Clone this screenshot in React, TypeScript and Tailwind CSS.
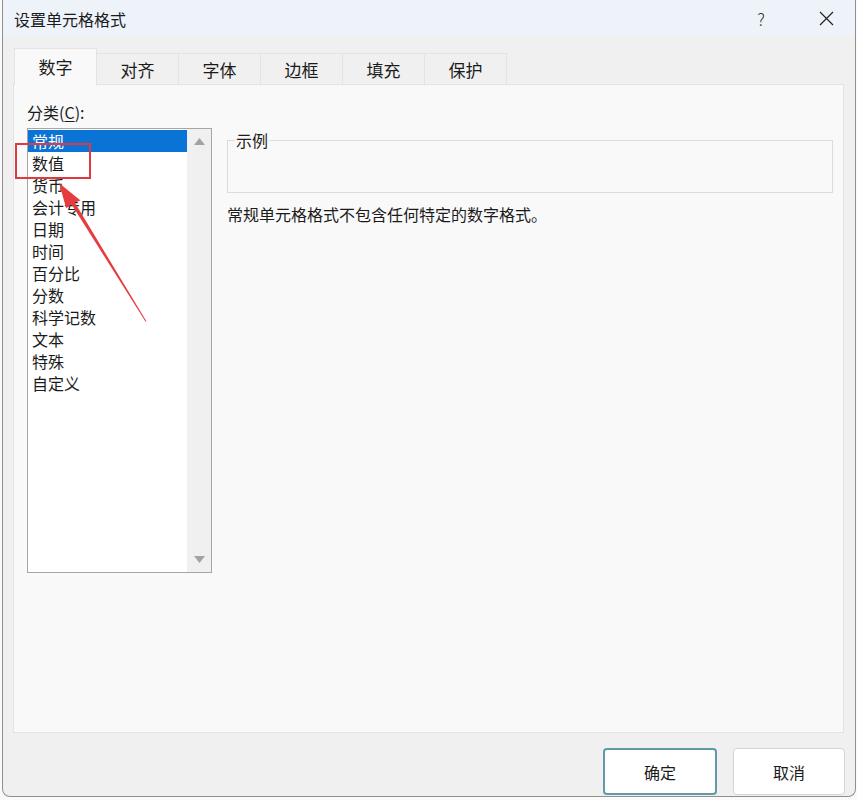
import React from "react";

const tabs = ["数字", "对齐", "字体", "边框", "填充", "保护"];

const categories = [
  "常规",
  "数值",
  "货币",
  "会计专用",
  "日期",
  "时间",
  "百分比",
  "分数",
  "科学记数",
  "文本",
  "特殊",
  "自定义",
];

export default function App() {
  return (
    <div className="relative w-[857px] h-[800px] overflow-hidden bg-[#fafafa] font-['Noto_Sans_CJK_SC','Noto_Sans',sans-serif] text-[#1b1b1b]">
      {/* Dialog window */}
      <div className="ml-[2px] w-[854px] h-[797px] flex flex-col border-x border-b border-[#8f8f8f] rounded-b-[8px] overflow-hidden bg-[#f0f0f0]">
        {/* Title bar */}
        <div className="h-[37px] shrink-0 flex items-center bg-[#eef3fa]">
          <span className="pl-[11px] text-[16px] leading-none">设置单元格格式</span>
          <span className="ml-auto mr-[54px] text-[17px] font-light leading-none text-[#333]">?</span>
          <svg className="mr-[21px] w-[15px] h-[15px]" viewBox="0 0 15 15">
            <path d="M1 1L14 14M14 1L1 14" stroke="#222" strokeWidth={1.2} fill="none" />
          </svg>
        </div>

        {/* Tabs */}
        <div className="mt-[11px] h-[36px] pl-[11px] flex items-end">
          {tabs.map((t, i) =>
            i === 0 ? (
              <div
                key={t}
                className="relative z-10 w-[83px] h-[37px] -mb-px flex items-center justify-center bg-[#f9f9f9] border-x border-t border-[#e3e3e3] text-[17px]"
              >
                {t}
              </div>
            ) : (
              <div
                key={t}
                className="w-[82px] h-[31px] flex items-center justify-center bg-[#f0f0f0] border-t border-r border-[#e3e3e3] text-[17px] pt-[1px]"
              >
                {t}
              </div>
            )
          )}
        </div>

        {/* Panel */}
        <div className="ml-[10px] w-[831px] h-[649px] bg-[#f9f9f9] border border-[#e3e3e3] pl-[13px] pr-[10px] pt-[17px] flex gap-[15px]">
          <div className="flex flex-col">
            <div className="text-[16px] leading-[20px] h-[26px]">
              分类(<span className="underline underline-offset-2">C</span>):
            </div>
            <div className="w-[185px] h-[445px] border border-[#a6a6a6] bg-white flex">
              <div className="flex-1 pt-[1px]">
                {categories.map((c, i) => (
                  <div
                    key={c}
                    className={
                      i === 0
                        ? "h-[22px] pl-[4px] text-[16px] leading-[22px] bg-[#0a74d6] text-white"
                        : "h-[22px] pl-[4px] text-[16px] leading-[22px]"
                    }
                  >
                    {c}
                  </div>
                ))}
              </div>
              <div className="w-[24px] bg-[#f0f0f0] flex flex-col items-center justify-between py-[9px]">
                <svg className="w-[11px] h-[7px]" viewBox="0 0 11 7">
                  <path d="M5.5 0L11 7H0Z" fill="#a3a3a3" />
                </svg>
                <svg className="w-[11px] h-[7px]" viewBox="0 0 11 7">
                  <path d="M0 0H11L5.5 7Z" fill="#a3a3a3" />
                </svg>
              </div>
            </div>
          </div>

          <div className="flex-1 flex flex-col pt-[38px]">
            <div className="relative h-[53px] border border-[#dcdcdc]">
              <span className="absolute -top-[11px] left-[7px] px-[1px] bg-[#f9f9f9] text-[16px] leading-[20px]">
                示例
              </span>
            </div>
            <div className="mt-[10px] text-[16px] leading-[22px]">
              常规单元格格式不包含任何特定的数字格式。
            </div>
          </div>
        </div>

        {/* Buttons */}
        <div className="mt-[15px] flex justify-end gap-[16px] pr-[10px]">
          <button className="w-[114px] h-[47px] rounded-[4px] border-2 border-[#5f9aa6] bg-white text-[16px]">
            确定
          </button>
          <button className="w-[112px] h-[47px] rounded-[4px] border border-[#d4d4d4] bg-white text-[16px]">
            取消
          </button>
        </div>
      </div>

      {/* Annotation: red box */}
      <div className="absolute left-[15px] top-[143px] w-[76px] h-[36px] border-2 border-[#df3a3f]" />

      {/* Annotation: red arrow */}
      <svg className="absolute left-0 top-0 w-[200px] h-[340px] pointer-events-none" viewBox="0 0 200 340">
        <path
          d="M59 183L80.5 200.5L74.8 202.6L146.4 321.3L145.6 321.7L71.6 204.6L66.2 208.3Z"
          fill="#e63b3f"
        />
      </svg>
    </div>
  );
}
